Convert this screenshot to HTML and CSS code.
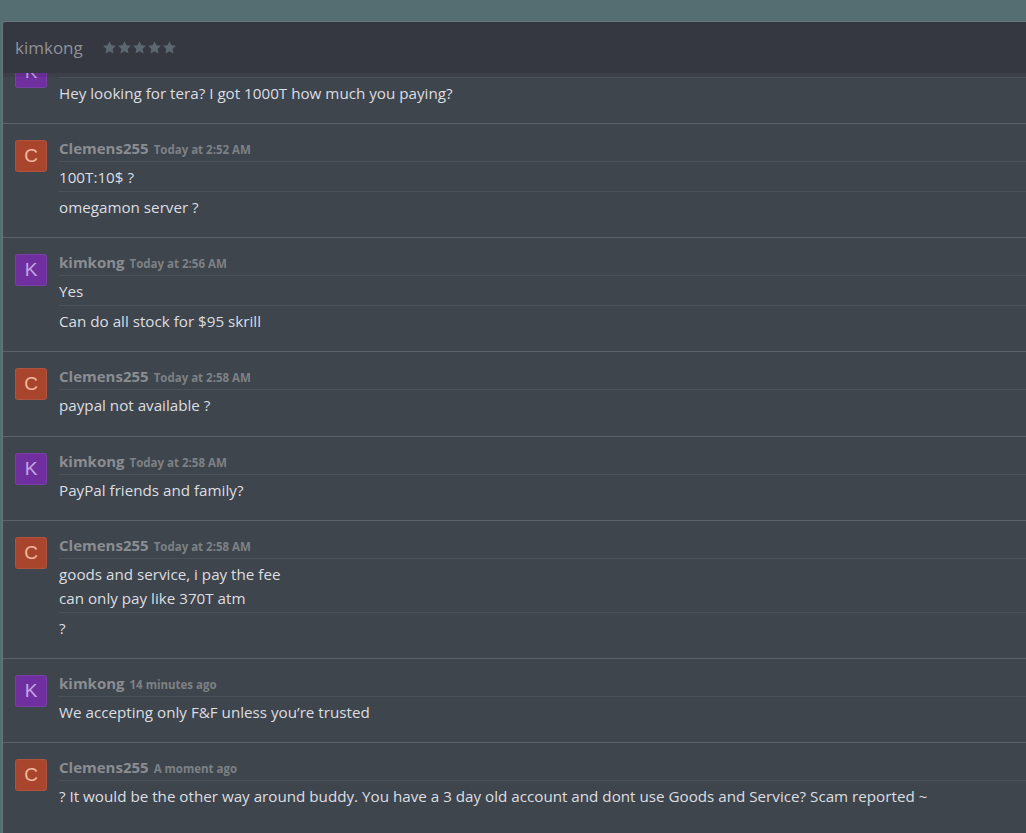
FILE: index.html
```html
<!DOCTYPE html>
<html>
<head>
<meta charset="utf-8">
<link rel="stylesheet" href="styles.css">
</head>
<body>
<div class="window">
  <div class="header">
    <span class="title">kimkong</span>
    <span class="stars">
      <svg viewBox="0 0 24 24" class="star"><path d="M12 1.8l3.1 6.6 7.2.9-5.3 5 1.4 7.1L12 17.9l-6.4 3.5L7 14.3l-5.3-5 7.2-.9z"/></svg>
      <svg viewBox="0 0 24 24" class="star"><path d="M12 1.8l3.1 6.6 7.2.9-5.3 5 1.4 7.1L12 17.9l-6.4 3.5L7 14.3l-5.3-5 7.2-.9z"/></svg>
      <svg viewBox="0 0 24 24" class="star"><path d="M12 1.8l3.1 6.6 7.2.9-5.3 5 1.4 7.1L12 17.9l-6.4 3.5L7 14.3l-5.3-5 7.2-.9z"/></svg>
      <svg viewBox="0 0 24 24" class="star"><path d="M12 1.8l3.1 6.6 7.2.9-5.3 5 1.4 7.1L12 17.9l-6.4 3.5L7 14.3l-5.3-5 7.2-.9z"/></svg>
      <svg viewBox="0 0 24 24" class="star"><path d="M12 1.8l3.1 6.6 7.2.9-5.3 5 1.4 7.1L12 17.9l-6.4 3.5L7 14.3l-5.3-5 7.2-.9z"/></svg>
    </span>
  </div>
  <div class="feed">
    <div class="list">
      <div class="block">
        <div class="avatar k">K</div>
        <div class="body">
          <div class="head"><span class="name">kimkong</span><span class="time">Today at 2:50 AM</span></div>
          <div class="line">Hey looking for tera? I got 1000T how much you paying?</div>
        </div>
      </div>
      <div class="block">
        <div class="avatar c">C</div>
        <div class="body">
          <div class="head"><span class="name">Clemens255</span><span class="time">Today at 2:52 AM</span></div>
          <div class="line">100T:10$ ?</div>
          <div class="line">omegamon server ?</div>
        </div>
      </div>
      <div class="block">
        <div class="avatar k">K</div>
        <div class="body">
          <div class="head"><span class="name">kimkong</span><span class="time">Today at 2:56 AM</span></div>
          <div class="line">Yes</div>
          <div class="line">Can do all stock for $95 skrill</div>
        </div>
      </div>
      <div class="block">
        <div class="avatar c">C</div>
        <div class="body">
          <div class="head"><span class="name">Clemens255</span><span class="time">Today at 2:58 AM</span></div>
          <div class="line">paypal not available ?</div>
        </div>
      </div>
      <div class="block">
        <div class="avatar k">K</div>
        <div class="body">
          <div class="head"><span class="name">kimkong</span><span class="time">Today at 2:58 AM</span></div>
          <div class="line">PayPal friends and family?</div>
        </div>
      </div>
      <div class="block">
        <div class="avatar c">C</div>
        <div class="body">
          <div class="head"><span class="name">Clemens255</span><span class="time">Today at 2:58 AM</span></div>
          <div class="line">goods and service, i pay the fee<br>can only pay like 370T atm</div>
          <div class="line">?</div>
        </div>
      </div>
      <div class="block">
        <div class="avatar k">K</div>
        <div class="body">
          <div class="head"><span class="name">kimkong</span><span class="time">14 minutes ago</span></div>
          <div class="line">We accepting only F&amp;F unless you’re trusted</div>
        </div>
      </div>
      <div class="block">
        <div class="avatar c">C</div>
        <div class="body">
          <div class="head"><span class="name">Clemens255</span><span class="time">A moment ago</span></div>
          <div class="line">? It would be the other way around buddy. You have a 3 day old account and dont use Goods and Service? Scam reported ~</div>
        </div>
      </div>
    </div>
  </div>
</div>
</body>
</html>
```

FILE: styles.css
```css
html, body {
  margin: 0;
  padding: 0;
  height: 100%;
  overflow: hidden;
}
body {
  background: #546e71;
  font-family: "Open Sans", "Noto Sans", sans-serif;
  color: #dcdee0;
}
.window {
  margin: 21px 0 0 2px;
  width: 1040px;
  height: 830px;
  border: 1px solid #66777c;
  border-bottom: none;
  border-radius: 4px 0 0 0;
  background: #3f454d;
  display: flex;
  flex-direction: column;
  overflow: hidden;
}
.header {
  position: relative;
  z-index: 2;
  height: 51px;
  flex: none;
  background: #353840;
  display: flex;
  align-items: center;
  padding-left: 12px;
  box-shadow: 0 4px 0 rgba(30, 34, 40, 0.12);
}
.title {
  font-size: 17px;
  color: #8e9297;
}
.stars {
  display: flex;
  margin-left: 19px;
  gap: 0;
}
.star {
  width: 15px;
  height: 15px;
  fill: #5c6772;
}
.feed {
  flex: 1;
  overflow: hidden;
}
.list {
  margin-top: -34px;
}
.block {
  display: flex;
  border-top: 1px solid #59626b;
  padding: 16px 0 16px 12px;
}
.block + .block {
  padding-bottom: 16.2px;
}
.avatar {
  width: 30px;
  height: 30px;
  flex: none;
  border-radius: 3px;
  border: 1px solid rgba(255, 255, 255, 0.08);
  display: flex;
  align-items: center;
  justify-content: center;
  font-family: "Liberation Sans", Arial, sans-serif;
  font-size: 19px;
}
.avatar.k {
  background: #6f2f9e;
  color: #c9a3e4;
}
.avatar.c {
  background: #a8452c;
  color: #f2b8a2;
}
.body {
  flex: 1;
  margin-left: 12px;
}
.head {
  height: 21px;
  display: flex;
  align-items: baseline;
  line-height: 17px;
}
.name {
  font-weight: 700;
  font-size: 15px;
  color: #8a8d91;
}
.time {
  font-weight: 700;
  font-size: 11.5px;
  color: #7d8185;
  margin-left: 5px;
}
.line {
  border-top: 1px solid #4b525a;
  padding: 3px 0 2px;
  line-height: 24px;
  font-size: 15.2px;
}
```
